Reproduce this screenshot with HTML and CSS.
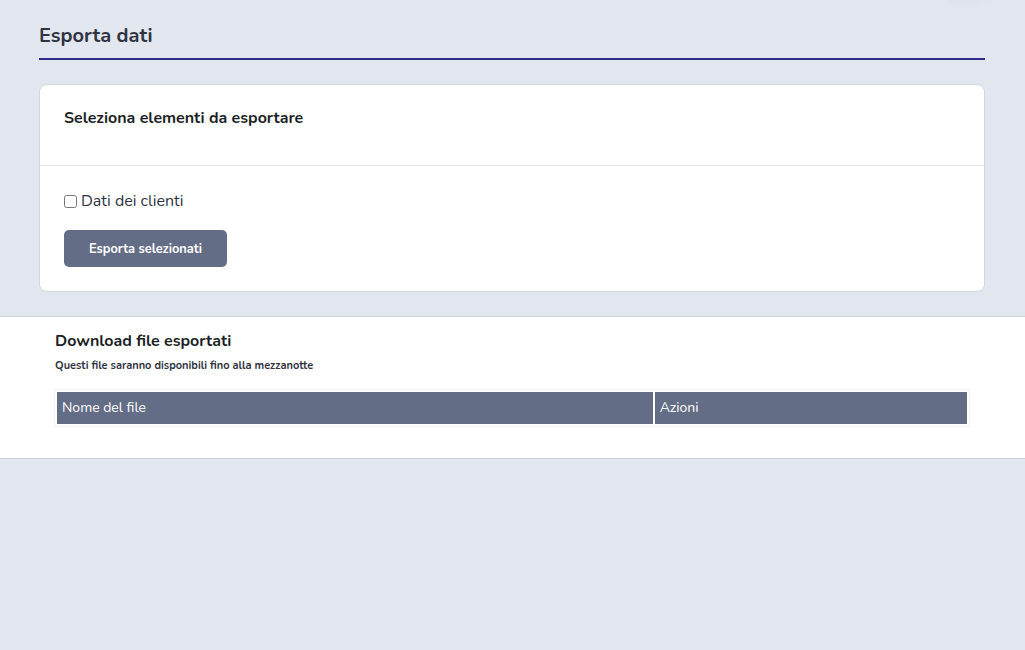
FILE: index.html
```html
<!DOCTYPE html>
<html lang="it">
<head>
<meta charset="utf-8">
<title>Esporta dati</title>
<link rel="stylesheet" href="styles.css">
</head>
<body>
<div class="top-blob"></div>
<div class="top">
  <h1 class="page-title">Esporta dati</h1>
  <div class="card">
    <div class="card-header">
      <h5 class="card-title">Seleziona elementi da esportare</h5>
    </div>
    <div class="card-body">
      <label class="check"><input type="checkbox" class="check-input"> Dati dei clienti</label>
      <button class="btn" type="button">Esporta selezionati</button>
    </div>
  </div>
</div>
<section class="downloads">
  <h3 class="dl-title">Download file esportati</h3>
  <p class="dl-sub">Questi file saranno disponibili fino alla mezzanotte</p>
  <table class="files">
    <thead>
      <tr><th class="col-name">Nome del file</th><th>Azioni</th></tr>
    </thead>
  </table>
</section>
</body>
</html>
```

FILE: styles.css
```css
html, body {
  margin: 0;
  padding: 0;
  background: #e2e7ef;
  font-family: "Nunito", "Lato", "Noto Sans", sans-serif;
  color: #212529;
}
body { position: relative; min-height: 650px; }
.top-blob {
  position: absolute;
  top: -30px;
  left: 938px;
  width: 54px;
  height: 34px;
  border-radius: 50%;
  background: #d9dee7;
  filter: blur(3px);
  opacity: 0.7;
}
.top {
  padding: 0 40px 0 39px;
}
.page-title {
  margin: 0;
  padding: 22px 0 8px;
  font-size: 20px;
  line-height: 28px;
  font-weight: 700;
  color: #2f3342;
  border-bottom: 2px solid #2e2a8c;
}
.card {
  margin-top: 24px;
  background: #fff;
  border: 1px solid #d3d8e0;
  border-radius: 8px;
}
.card-header {
  padding: 22px 24px 36px;
  border-bottom: 1px solid #e3e6ea;
}
.card-title {
  margin: 0;
  font-size: 16px;
  line-height: 22px;
  font-weight: 700;
  color: #1d1f26;
}
.card-body {
  padding: 23px 24px 24px;
  display: flex;
  flex-direction: column;
  align-items: flex-start;
}
.check {
  display: flex;
  align-items: center;
  font-size: 16px;
  line-height: 24px;
  color: #2f3342;
}
.check-input {
  margin: 0 4px 0 0;
  width: 13px;
  height: 13px;
}
.btn {
  margin-top: 17px;
  width: 163px;
  height: 37px;
  border: 0;
  border-radius: 5px;
  background: #646d86;
  color: #fff;
  font-family: inherit;
  font-size: 12.8px;
  font-weight: 700;
}
.downloads {
  margin-top: 24px;
  background: #fff;
  border-top: 1px solid #cfd4db;
  border-bottom: 1px solid #cfd4db;
  padding: 13px 55px 31px 54px;
}
.dl-title {
  margin: 0 0 0 1px;
  font-size: 16px;
  line-height: 22px;
  font-weight: 700;
  color: #1d1f26;
}
.dl-sub {
  margin: 6px 0 0 1px;
  font-size: 11px;
  line-height: 16px;
  font-weight: 700;
  color: #2f3342;
}
.files {
  margin-top: 15px;
  width: 100%;
  border: 1px solid #f2f4f7;
  border-spacing: 2px;
}
.files th {
  background: #646d86;
  color: #fff;
  text-align: left;
  font-weight: 400;
  font-size: 14px;
  line-height: 24px;
  padding: 4px 5px;
}
.files .col-name { width: 65.6%; }
```
